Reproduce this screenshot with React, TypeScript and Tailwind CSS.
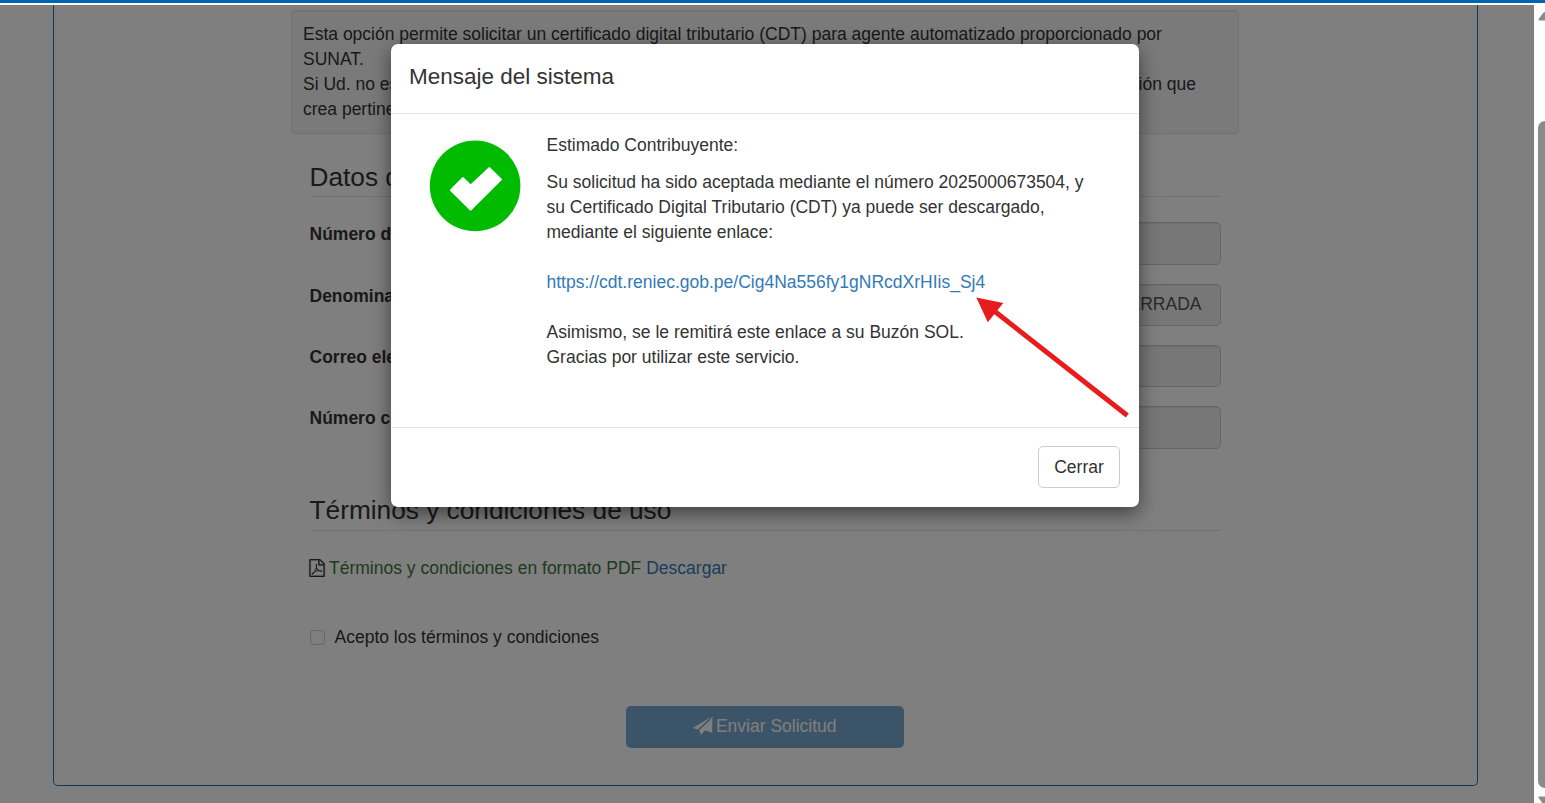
import React from "react";

const FIELDS = [
  { label: "Número de RUC", value: "" },
  { label: "Denominación", value: "SOCIEDAD ANONIMA CERRADA" },
  { label: "Correo electrónico", value: "" },
  { label: "Número celular", value: "" },
];

function FilePdfIcon() {
  return (
    <svg viewBox="0 0 1792 1792" className="h-[18px] w-[18px] shrink-0" fill="currentColor" stroke="currentColor" strokeWidth="25">
      <path d="M1596 380q28 28 48 76t20 88v1152q0 40-28 68t-68 28H224q-40 0-68-28t-28-68V96q0-40 28-68t68-28h896q40 0 88 20t76 48zm-444-244v376h376q-10-29-22-41l-313-313q-12-12-41-22zm384 1528V640h-416q-40 0-68-28t-28-68V128H256v1536h1280zm-514-593q33 26 84 56 59-7 117-7 147 0 177 49 16 22 2 52 0 1-1 2l-2 2v1q-6 38-71 38-48 0-115-20t-130-53q-221 24-392 83-153 262-242 262-15 0-28-7l-24-12q-1-1-6-5-10-10-6-36 9-40 56-91.5t132-96.5q14-9 23 6 2 2 2 4 52-85 107-197 68-136 104-262-24-82-30.5-159.500t6.500-127.500q11-40 42-40h22q23 0 35 15 18 21 9 68-2 6-4 8 1 3 1 8v30q-2 123-14 192 55 164 146 238zm-576 411q52-24 137-158-51 40-87.500 84t-49.500 74zm398-920q-15 42-2 132 1-7 7-44 0-3 7-43 1-4 4-8-1-1-1-2t-1-2q-1-22-13-36 0 1-1 2v2zm-124 661q135-54 284-81-2-1-13-9.500t-16-13.500q-76-67-127-176-27 86-83 197-30 56-45 83zm646-16q-24-24-140-24 76 28 124 28 14 0 18-1 0-1-2-3z" />
    </svg>
  );
}

function PaperPlaneIcon() {
  return (
    <svg viewBox="0 0 20 20" className="h-[20px] w-[20px] shrink-0" fill="currentColor">
      <path d="M0 11.900 18.700 0.500 4.800 13.600Z" />
      <path d="M19.500 0.700 19.100 16.800 12.200 14.300 7.800 18.700 6.200 14.200 17.300 3.900 9.500 13.500Z" />
    </svg>
  );
}

function Notice() {
  return (
    <div className="h-[124px] w-[948px] rounded-[4px] border border-[#e3e3e3] bg-[#f5f5f5] px-[11px] pt-[11px] shadow-[inset_0_1px_1px_rgba(0,0,0,0.05)]">
      <p className="whitespace-nowrap">Esta opción permite solicitar un certificado digital tributario (CDT) para agente automatizado proporcionado por</p>
      <p>SUNAT.</p>
      <p className="flex w-[893px] justify-between">
        <span>Si Ud. no es</span>
        <span>opción que</span>
      </p>
      <p>crea pertinente.</p>
    </div>
  );
}

function Form() {
  return (
    <div className="ml-[18.5px] w-[911px]">
      <h3 className="mt-[27px] h-[36px] border-b border-[#e5e5e5] text-[26.250px] leading-[33px]">Datos del contribuyente</h3>
      <div className="mt-[25.400px] flex flex-col gap-[19px]">
        {FIELDS.map((f) => (
          <div key={f.label} className="flex h-[42.300px] justify-between">
            <label className="font-bold">{f.label}</label>
            <div className="flex w-[600px] items-center justify-end rounded-[5px] border border-[#ccc] bg-[#eee] pb-px pr-[18px] text-[#555] shadow-[inset_0_1px_1px_rgba(0,0,0,0.075)]">
              {f.value}
            </div>
          </div>
        ))}
      </div>
      <h3 className="mt-[45.400px] h-[37px] border-b border-[#e5e5e5] text-[26.250px] leading-[33px]">Términos y condiciones de uso</h3>
      <p className="mt-[25px] flex items-center">
        <span className="-ml-[1.500px] mr-[3px]"><FilePdfIcon /></span>
        <span className="text-[#3c763d]">Términos y condiciones en formato PDF</span>
        <a className="ml-[5px] text-[#337ab7]">Descargar</a>
      </p>
      <label className="mt-[44px] flex items-center">
        <span className="h-[15px] w-[15px] rounded-[3px] border border-[#d0d0d0] bg-[#fcfcfc]" />
        <span className="ml-[10px]">Acepto los términos y condiciones</span>
      </label>
      <button className="ml-[316.500px] mt-[56px] flex h-[42px] w-[278px] items-center justify-center rounded-[5px] bg-[#337ab7] pb-px text-white opacity-65">
        <PaperPlaneIcon />
        <span className="ml-[2.500px]">Enviar Solicitud</span>
      </button>
    </div>
  );
}

function SuccessIcon() {
  return (
    <svg viewBox="0 0 92 92" className="h-[92px] w-[92px] shrink-0">
      <circle cx="46.100" cy="45.900" r="45.300" fill="#00bb00" />
      <path d="M21.600 50.200 33.900 37.900 41.600 45.200 60.400 27.700 72.300 39.500 41.600 70Z" fill="#fff" stroke="#fff" strokeWidth="1.500" strokeLinejoin="round" />
    </svg>
  );
}

function Dialog() {
  return (
    <div className="absolute left-[391px] top-[44px] flex h-[463px] w-[748px] flex-col rounded-[7px] bg-white shadow-[0_6px_19px_rgba(0,0,0,0.5)]">
      <div className="h-[70px] border-b border-[#e5e5e5] pl-[18px] pt-[17px]">
        <h4 className="text-[22.500px] leading-[32px]">Mensaje del sistema</h4>
      </div>
      <div className="flex h-[313px] pl-[38px] pt-[19px]">
        <div className="pt-[7px]"><SuccessIcon /></div>
        <div className="ml-[25.500px] whitespace-nowrap">
          <p>Estimado Contribuyente:</p>
          <p className="mt-[12px]">
            Su solicitud ha sido aceptada mediante el número 2025000673504, y<br />
            su Certificado Digital Tributario (CDT) ya puede ser descargado,<br />
            mediante el siguiente enlace:
          </p>
          <a className="mt-[25px] block text-[#337ab7]">https://cdt.reniec.gob.pe/Cig4Na556fy1gNRcdXrHIis_Sj4</a>
          <p className="mt-[25px]">
            Asimismo, se le remitirá este enlace a su Buzón SOL.<br />
            Gracias por utilizar este servicio.
          </p>
        </div>
      </div>
      <div className="flex flex-1 justify-end border-t border-[#e5e5e5] pr-[19px] pt-[18px]">
        <button className="h-[42px] w-[82px] rounded-[5px] border border-[#ccc] bg-white">Cerrar</button>
      </div>
      {/* Annotation arrow pointing at the download link */}
      <svg viewBox="0 0 156 124" className="absolute left-[584px] top-[252px] h-[124px] w-[156px]" fill="#e71d1d">
        <path d="M18 14 152.300 119.500" stroke="#e71d1d" strokeWidth="5" />
        <path d="M1.300 1.500 28.300 7 12.800 26.200Z" />
      </svg>
    </div>
  );
}

function Scrollbar() {
  return (
    <div className="flex w-[11px] shrink-0 flex-col overflow-hidden bg-[#fcfcfc] pl-[4px] text-[#8b8b8b]">
      <svg viewBox="0 0 14 9" className="mt-[7px] h-[9px] w-[14px] shrink-0" fill="currentColor">
        <path d="M1.500 8.500Q0 8.500.700 7L5 1Q7-1 9 1L13.300 7Q14 8.500 12.500 8.500Z" />
      </svg>
      <div className="mt-[100px] h-[667px] w-[14px] shrink-0 rounded-[7px] bg-current" />
      <svg viewBox="0 0 14 9" className="mt-[8px] h-[9px] w-[14px] shrink-0" fill="currentColor">
        <path d="M1.500.500Q0 .500.700 2L5 8Q7 10 9 8L13.300 2Q14 .500 12.500.500Z" />
      </svg>
    </div>
  );
}

export default function App() {
  return (
    <div className="relative flex h-[803px] w-[1545px] flex-col overflow-hidden bg-white font-['Liberation_Sans',Arial,sans-serif] text-[17.500px] leading-[25px] text-[#333]">
      <div className="h-[3px] shrink-0 bg-[#0263ae]" />
      <div className="flex flex-1 pt-[2px]">
        <div className="relative w-[1534px] overflow-hidden">
          <div className="ml-[53px] h-[781px] w-[1425px] rounded-b-[5px] border-x border-b border-solid border-x-[#1a70b8] border-b-[#1a70b8] pl-[237px] pt-[5px]">
            <Notice />
            <Form />
          </div>
          <div className="absolute inset-0 bg-black/50" />
        </div>
        <Scrollbar />
      </div>
      <Dialog />
    </div>
  );
}
